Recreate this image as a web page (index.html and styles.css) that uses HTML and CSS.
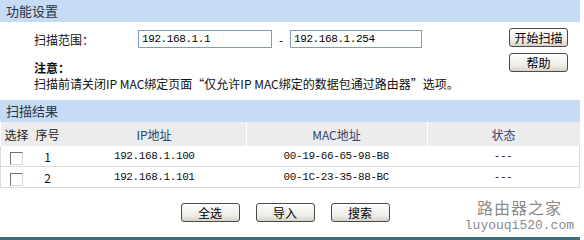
FILE: index.html
```html
<!DOCTYPE html>
<html lang="zh-CN">
<head>
    <meta charset="UTF-8">
    <title>扫描</title>
    <link rel="stylesheet" href="styles.css">
</head>
<body>
    <div class="panel">
        <div class="bar">功能设置</div>
        <div class="settings">
            <div class="settings-main">
                <div class="range-row">
                    <span class="range-label">扫描范围：</span>
                    <input class="ip-input" type="text" value="192.168.1.1">
                    <span class="dash">-</span>
                    <input class="ip-input ip-end" type="text" value="192.168.1.254">
                </div>
                <div class="note-title">注意：</div>
                <div class="note-text">扫描前请关闭IP MAC绑定页面“仅允许IP MAC绑定的数据包通过路由器”选项。</div>
            </div>
            <div class="settings-side">
                <button class="btn">开始扫描</button>
                <button class="btn">帮助</button>
            </div>
        </div>

        <div class="bar">扫描结果</div>
        <table class="results">
            <thead>
                <tr>
                    <th class="col-pick">选择</th>
                    <th class="col-no">序号</th>
                    <th class="col-ip sep">IP地址</th>
                    <th class="col-mac sep">MAC地址</th>
                    <th class="col-state">状态</th>
                </tr>
            </thead>
            <tbody>
                <tr>
                    <td><span class="check"></span></td>
                    <td>1</td>
                    <td class="num">192.168.1.100</td>
                    <td class="num mac">00-19-66-65-98-B8</td>
                    <td class="num">---</td>
                </tr>
                <tr>
                    <td><span class="check"></span></td>
                    <td>2</td>
                    <td class="num">192.168.1.101</td>
                    <td class="num mac">00-1C-23-35-88-BC</td>
                    <td class="num">---</td>
                </tr>
            </tbody>
        </table>

        <div class="actions">
            <button class="btn">全选</button>
            <button class="btn">导入</button>
            <button class="btn">搜索</button>
        </div>

        <div class="footer">
            <div class="mark">
                <div class="mark-cn">路由器之家</div>
                <div class="mark-url">luyouqi520.com</div>
            </div>
        </div>
    </div>
</body>
</html>
```

FILE: styles.css
```css
body {
    margin: 0;
    padding: 0;
    background: #fff;
    font-family: "Noto Sans CJK SC", sans-serif;
    font-size: 12px;
    color: #111;
}
.panel {
    width: 580px;
    height: 240px;
    display: flex;
    flex-direction: column;
}
.bar {
    height: 22px;
    line-height: 22px;
    padding-left: 6px;
    background-color: #c6dcf6;
    color: #2a3444;
    font-size: 13px;
}
.settings {
    height: 78px;
    display: flex;
    justify-content: space-between;
}
.settings-main {
    padding-left: 34px;
    padding-top: 8px;
}
.range-row {
    display: flex;
    align-items: center;
    height: 18px;
}
.range-label {
    width: 104px;
}
.ip-input {
    box-sizing: border-box;
    width: 134px;
    height: 18px;
    margin: 0;
    padding: 0 3px;
    border: 1px solid #7f9db9;
    font-family: "Liberation Mono", "Noto Sans CJK SC", monospace;
    font-size: 11px;
    color: #000;
    letter-spacing: -0.4px;
}
.ip-input.ip-end {
    width: 132px;
}
.dash {
    width: 18px;
    text-align: center;
}
.note-title {
    margin-top: 12px;
    font-weight: bold;
    line-height: 16px;
}
.note-text {
    line-height: 16px;
}
.settings-side {
    display: flex;
    flex-direction: column;
    gap: 6px;
    padding-top: 6px;
    padding-right: 12px;
}
.btn {
    box-sizing: border-box;
    width: 59px;
    height: 19px;
    padding: 0;
    border: 1px solid #4a4a4a;
    border-radius: 3px;
    background: linear-gradient(#ffffff, #ecebe6 70%, #d6d2c8);
    font-family: "Noto Sans CJK SC", sans-serif;
    font-size: 12px;
    color: #000;
    line-height: 16px;
}
.results {
    width: 580px;
    border-collapse: collapse;
    table-layout: fixed;
}
.results th {
    height: 24px;
    padding: 0;
    background-color: #ececec;
    font-weight: normal;
    color: #2d4370;
    font-size: 12px;
}
.results th.col-pick, .results th.col-no {
    color: #222;
}
.results th.sep {
    border-right: 1px solid #fff;
}
.col-pick { width: 32px; }
.col-no { width: 30px; }
.col-ip { width: 183px; }
.col-mac { width: 180px; }
.results td {
    height: 20px;
    padding: 0;
    text-align: center;
    border-bottom: 1px solid #dcdcdc;
}
.results tbody tr td:first-child {
    border-left: 1px solid #dcdcdc;
}
.results tbody tr td:last-child {
    border-right: 1px solid #dcdcdc;
}
.results td.num {
    font-family: "Liberation Mono", "Noto Sans CJK SC", monospace;
    font-size: 11px;
    letter-spacing: -0.4px;
}
.results td.mac {
    text-align: right;
    padding-right: 38px;
}
.check {
    display: inline-block;
    width: 11px;
    height: 11px;
    border: 1px solid #6f6f6f;
    border-right-color: #d8d8d8;
    border-bottom-color: #d8d8d8;
    vertical-align: middle;
}
.actions {
    display: flex;
    justify-content: center;
    gap: 16px;
    margin-top: 15px;
    padding-right: 10px;
}
.footer {
    flex: 1;
    position: relative;
    border-bottom: 3px solid #3c6e7c;
}
.mark {
    position: absolute;
    right: 6px;
    bottom: 4px;
    text-align: center;
    color: #8a8a8a;
}
.mark-cn {
    font-family: "Noto Sans CJK SC", serif;
    font-size: 16px;
    line-height: 21px;
    letter-spacing: 1px;
}
.mark-url {
    font-family: "Liberation Mono", monospace;
    font-size: 13px;
    line-height: 15px;
}
```
